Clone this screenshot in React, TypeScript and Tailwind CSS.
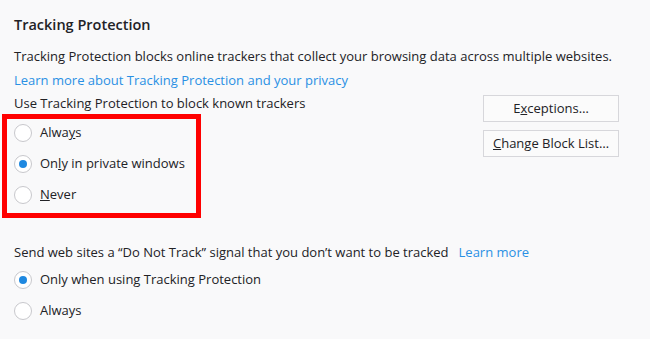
import React from "react";

function Radio({ checked }: { checked?: boolean }) {
  return (
    <span className="flex h-[18px] w-[18px] shrink-0 items-center justify-center rounded-full border border-[#c8c8cc] bg-white">
      {checked && <span className="h-[8px] w-[8px] rounded-full bg-[#1e88e0]" />}
    </span>
  );
}

function RadioRow({ checked, children, className }: { checked?: boolean; children: React.ReactNode; className?: string }) {
  return (
    <div className={"flex items-center gap-[8px] " + (className ?? "")}>
      <Radio checked={checked} />
      <span>{children}</span>
    </div>
  );
}

export default function App() {
  return (
    <div
      className="h-[339px] w-[650px] overflow-hidden bg-[#f9f9fa] pl-[14px] pt-[15px] text-[13px] text-[#222226]"
      style={{ fontFamily: '"Open Sans", "Noto Sans", sans-serif' }}
    >
      <div className="h-[20px] text-[14.5px] font-semibold leading-[20px]">Tracking Protection</div>
      <div className="mt-[9px] h-[24px] whitespace-nowrap leading-[24px]">
        Tracking Protection blocks online trackers that collect your browsing data across multiple websites.
      </div>
      <div className="h-[24px] leading-[24px] text-[#2a90e4]">Learn more about Tracking Protection and your privacy</div>
      <div className="flex justify-between pr-[31px]">
        <div>
          <div className="h-[22px] leading-[22px]">Use Tracking Protection to block known trackers</div>
          <div className="ml-[-12px] flex w-[199px] flex-col gap-[5px] border-[5px] border-[#ff0000] pb-[5px] pl-[7px] pt-[1px]">
            <RadioRow className="h-[26px]">
              Alwa<u>y</u>s
            </RadioRow>
            <RadioRow className="h-[26px]" checked>
              On<u>l</u>y in private windows
            </RadioRow>
            <RadioRow className="h-[26px]">
              <u>N</u>ever
            </RadioRow>
          </div>
        </div>
        <div className="mt-[3px] flex flex-col gap-[8px]">
          <button className="h-[27px] w-[136px] border border-[#d7d7db] bg-[#fbfbfb] text-center">
            E<u>x</u>ceptions…
          </button>
          <button className="h-[27px] w-[136px] border border-[#d7d7db] bg-[#fbfbfb] text-center">
            <u>C</u>hange Block List…
          </button>
        </div>
      </div>
      <div className="mt-[22px] flex h-[24px] items-center leading-[24px]">
        <span>Send web sites a “Do Not Track” signal that you don’t want to be tracked</span>
        <span className="ml-[10px] text-[#2a90e4]">Learn more</span>
      </div>
      <div className="mt-[3px] flex flex-col gap-[5px]">
        <RadioRow className="h-[26px]" checked>
          Only when using Tracking Protection
        </RadioRow>
        <RadioRow className="h-[26px]">Always</RadioRow>
      </div>
    </div>
  );
}
